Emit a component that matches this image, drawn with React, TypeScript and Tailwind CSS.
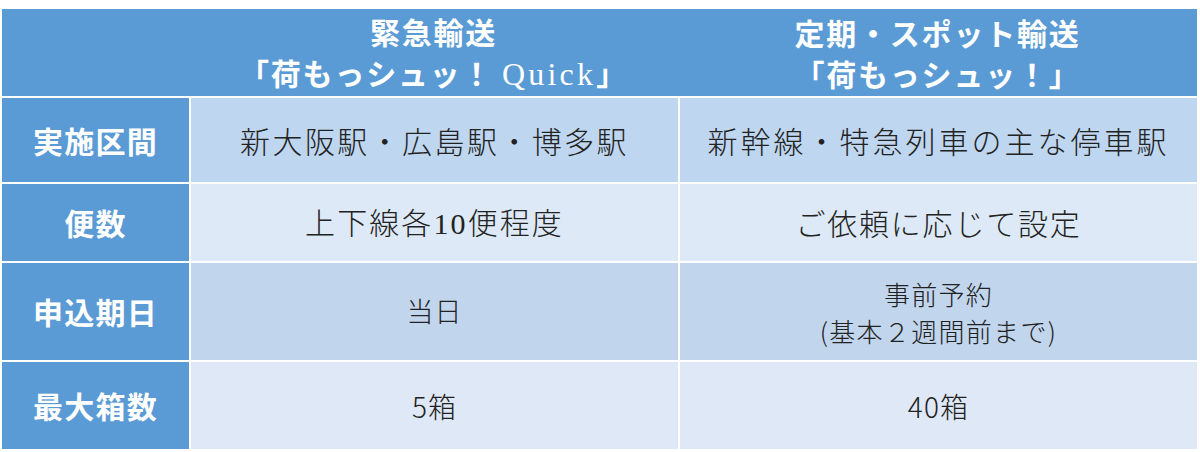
import React from "react";

const jp = { fontFamily: '"Noto Sans CJK JP", "Noto Sans", sans-serif' };
const serif = { fontFamily: '"Liberation Serif", "Noto Sans CJK JP", serif' };

function Body({ children, bg, className = "" }: { children: React.ReactNode; bg: string; className?: string }) {
  return (
    <div className={`flex flex-col items-center justify-center text-center font-light text-[#222222] ${bg} ${className}`}>
      {children}
    </div>
  );
}

function Label({ children }: { children: React.ReactNode }) {
  return (
    <div className="flex items-center justify-center bg-[#5b9bd5] text-white font-bold text-[30px] tracking-[0.04em]">
      {children}
    </div>
  );
}

export default function App() {
  return (
    <div className="w-[1200px] h-[452px] bg-white" style={jp}>
      <div className="ml-[2px] pt-[9px] w-[1195px]">
        <div className="grid grid-cols-[187px_489px_519px] h-[87px] bg-[#5b9bd5] text-white font-bold text-[30px] leading-[41px] tracking-[0.06em]">
          <div />
          <div className="flex flex-col items-center justify-center text-center">
            <div>緊急輸送</div>
            <div>
              「荷もっシュッ！ <span className="font-normal text-[32px] tracking-[0.1em]" style={serif}>Quick</span>」
            </div>
          </div>
          <div className="flex flex-col items-center justify-center text-center">
            <div>定期・スポット輸送</div>
            <div>「荷もっシュッ！」</div>
          </div>
        </div>
        <div className="mt-[2px] grid grid-cols-[187px_487px_517px] grid-rows-[84px_77px_97px_87px] gap-[2px]">
          <Label>実施区間</Label>
          <Body bg="bg-[#bed6ef]" className="text-[30px] tracking-[0.08em]">新大阪駅・広島駅・博多駅</Body>
          <Body bg="bg-[#bed6ef]" className="text-[30px] tracking-[0.1em]">新幹線・特急列車の主な停車駅</Body>

          <Label>便数</Label>
          <Body bg="bg-[#dde9f6]" className="text-[30px] tracking-[0.07em]">
            <div>
              上下線各<span style={serif}>10</span>便程度
            </div>
          </Body>
          <Body bg="bg-[#dde9f6]" className="text-[30px] tracking-[0.06em]">ご依頼に応じて設定</Body>

          <Label>申込期日</Label>
          <Body bg="bg-[#c1d5ed]" className="text-[27px] tracking-[0.04em]">当日</Body>
          <Body bg="bg-[#c1d5ed]" className="text-[26px] leading-[37px] tracking-[0.05em]">
            <div>事前予約</div>
            <div>(基本２週間前まで)</div>
          </Body>

          <Label>最大箱数</Label>
          <Body bg="bg-[#dee8f6]" className="text-[28px] tracking-[0.04em]">5箱</Body>
          <Body bg="bg-[#dee8f6]" className="text-[28px] tracking-[0.04em]">40箱</Body>
        </div>
      </div>
    </div>
  );
}
